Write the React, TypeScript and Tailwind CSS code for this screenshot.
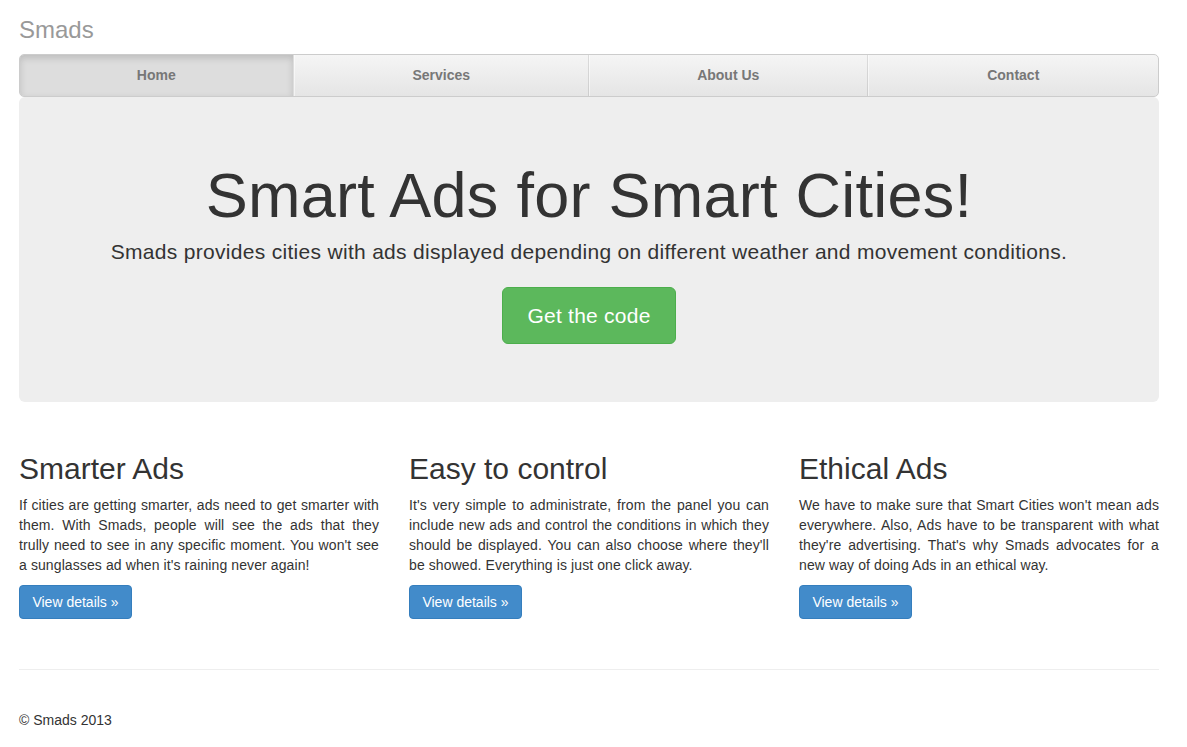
import React from "react";

const navItems = [
  { label: "Home", width: "w-[274px]", active: true },
  { label: "Services", width: "w-[296px]", active: false },
  { label: "About Us", width: "w-[279px]", active: false },
  { label: "Contact", width: "w-[291px]", active: false },
];

const features = [
  {
    title: "Smarter Ads",
    text: "If cities are getting smarter, ads need to get smarter with them. With Smads, people will see the ads that they trully need to see in any specific moment. You won't see a sunglasses ad when it's raining never again!",
  },
  {
    title: "Easy to control",
    text: "It's very simple to administrate, from the panel you can include new ads and control the conditions in which they should be displayed. You can also choose where they'll be showed. Everything is just one click away.",
  },
  {
    title: "Ethical Ads",
    text: "We have to make sure that Smart Cities won't mean ads everywhere. Also, Ads have to be transparent with what they're advertising. That's why Smads advocates for a new way of doing Ads in an ethical way.",
  },
];

function App() {
  return (
    <div className="min-h-screen bg-white font-['Liberation_Sans',Arial,sans-serif] text-[14px] leading-[20px] text-[#333]">
      <div className="ml-[19px] w-[1140px]">
        {/* masthead */}
        <h3 className="pt-[17px] pb-[11px] text-[24px] leading-[26px] text-[#999]">Smads</h3>

        <ul className="flex h-[43px] overflow-hidden rounded-[5px] border border-[#ccc] bg-gradient-to-b from-[#f5f5f5] to-[#e5e5e5]">
          {navItems.map((item) => (
            <li
              key={item.label}
              className={`${item.width} flex items-center justify-center border-r border-l pb-[2px] font-bold text-[#777] first:border-l-0 last:border-r-0 ${
                item.active
                  ? "border-r-[#ddd] border-l-transparent bg-[#ddd] shadow-[inset_0_3px_7px_rgba(0,0,0,0.15)]"
                  : "border-r-[rgba(0,0,0,0.1)] border-l-[rgba(255,255,255,0.5)]"
              }`}
            >
              {item.label}
            </li>
          ))}
        </ul>

        {/* jumbotron */}
        <div className="flex h-[305px] flex-col items-center rounded-[6px] bg-[#eee] pt-[62px] text-center">
          <h1 className="text-[63px] leading-[72px] tracking-[0.25px] text-[#333]">Smart Ads for Smart Cities!</h1>
          <p className="mt-[6px] text-[21px] leading-[29px] tracking-[0.3px] text-[#333]">
            Smads provides cities with ads displayed depending on different weather and movement conditions.
          </p>
          <button className="mt-[21px] h-[57px] rounded-[6px] border border-[#4cae4c] bg-[#5cb85c] px-[24px] text-[21px] tracking-[0.25px] text-white">
            Get the code
          </button>
        </div>

        {/* features */}
        <div className="mt-[30px] flex gap-[30px]">
          {features.map((f) => (
            <div key={f.title} className="w-[360px]">
              <h2 className="mt-[20px] mb-[10px] text-[30px] leading-[33px] text-[#333]">{f.title}</h2>
              <p className="mb-[10px] text-justify tracking-[0.1px]">{f.text}</p>
              <button className="h-[34px] w-[113px] rounded-[4px] border border-[#357ebd] bg-[#428bca] text-white">
                View details »
              </button>
            </div>
          ))}
        </div>

        <hr className="mt-[50px] border-t border-[#eee]" />

        <footer className="pt-[40px] pb-[20px]">© Smads 2013</footer>
      </div>
    </div>
  );
}

export default App;
